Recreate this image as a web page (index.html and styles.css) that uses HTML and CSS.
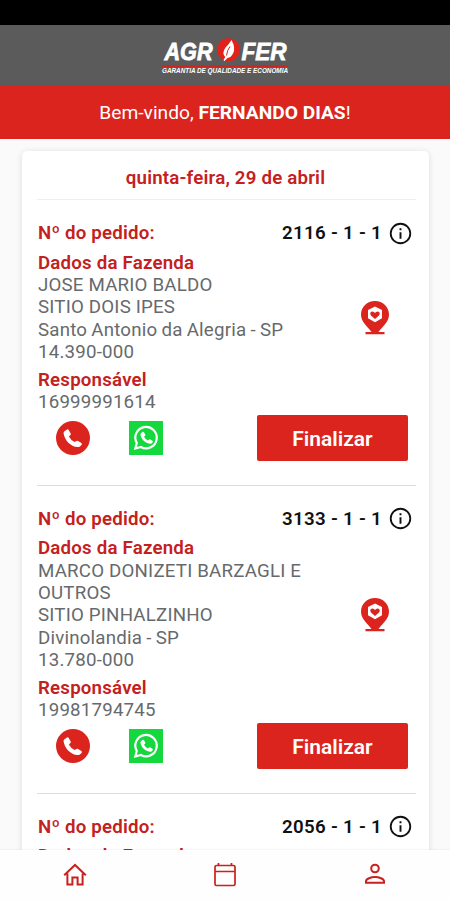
FILE: index.html
```html
<!DOCTYPE html>
<html lang="pt-BR">
<head>
    <meta charset="UTF-8">
    <meta name="viewport" content="width=device-width, initial-scale=1.0">
    <title>Agrofer - Pedidos</title>
    <link rel="stylesheet" href="styles.css">
</head>
<body>

    <!-- Ícones reutilizados -->
    <svg class="sprite" width="0" height="0">
        <symbol id="info" viewBox="0 0 24 24">
            <circle cx="12" cy="12" r="10.2" fill="none" stroke="#111" stroke-width="1.9"/>
            <path d="M11 6.6h2v2h-2zM11 10.6h2v6.8h-2z" fill="#111"/>
        </symbol>
        <symbol id="pin" viewBox="0 0 30 36">
            <path d="M15 1C7 1 1 7 1 14.5C1 22 7 26 11.5 32H5.5v2.2h19V32h-6C23 26 29 22 29 14.5C29 7 23 1 15 1z" fill="#db241d"/>
            <path d="M15 6.5l7 3.600v8.200l-7 4-7-4v-8.200z" fill="#fff"/>
            <path d="M15 19l-4-3.500q-1.300-1.500-.5-3 1.400-1.800 3.400-.5l1.100.9 1.100-.9q2-1.300 3.400.5.800 1.500-.5 3z" fill="#db241d"/>
        </symbol>
        <symbol id="phone" viewBox="0 0 34 34">
            <circle cx="17" cy="17" r="17" fill="#db241d"/>
            <path d="M8.200 10.600l2.800-2.100q1-.5 1.700.4l2 3.600q.4.900-.3 1.600l-1.500 1.300q2 3.800 5.700 5.700l1.900-1.100q.8-.4 1.600.1l3.200 2q1 .8.300 1.800l-1.800 1.700q-.8.600-2.200.5C14.500 25.200 8.800 19.500 7.600 12.400q-.1-1.200.6-1.800z" fill="#fff"/>
        </symbol>
        <symbol id="whats" viewBox="0 0 34 34">
            <path d="M0 0h34v34H0z" fill="#15d83f"/>
            <path d="M6.300 27.500l1.500-5.500a10.700 10.700 0 1 1 4.100 4z" fill="none" stroke="#fff" stroke-width="2.200"/>
            <path d="M12 12.300l1.600-1.500q.7-.4 1.200.2l1.500 2.600q.3.600-.2 1.100l-1.100 1q1.300 2.400 3.900 3.700l1.300-.9q.6-.4 1.200 0l2.300 1.400q.6.500.2 1.200l-1.400 1.300q-.7.500-1.700.3c-4.600-.8-8.500-4.700-9.300-8.800q-.1-1 .5-1.600z" fill="#fff"/>
        </symbol>
    </svg>

    <div class="status-bar"></div>

    <header class="topbar">
        <svg class="logo" width="130" height="41" viewBox="0 0 130 41">
            <g class="logo-name">
                <text x="4.500" y="24.500" textLength="48" lengthAdjust="spacingAndGlyphs">AGR</text>
                <text x="81.500" y="24.500" textLength="45" lengthAdjust="spacingAndGlyphs">FER</text>
            </g>
            <circle cx="68.500" cy="14.800" r="11.500" fill="#e3211b"/>
            <path d="M71.500 5q4.500 8 1.500 13.500-2 4-5.500 4.500l-3 3-1-.8 1.700-3.200q-3.700-4 .3-9.500Q69.500 8.500 71.500 5z" fill="#fff"/>
            <path d="M66.500 20.500q.5-5 3.500-9" stroke="#e3211b" stroke-width="1" fill="none"/>
            <path d="M2 31.200h126" stroke="#d3231d" stroke-width="1.600"/>
            <text class="logo-slogan" x="2" y="38" textLength="126" lengthAdjust="spacingAndGlyphs">GARANTIA DE QUALIDADE E ECONOMIA</text>
        </svg>
    </header>

    <div class="welcome">
        <p>Bem-vindo, <b>FERNANDO DIAS</b>!</p>
    </div>

    <main class="content">
        <div class="card">
            <h2 class="date">quinta-feira, 29 de abril</h2>

            <section class="order">
                <div class="order-head">
                    <h3>Nº do pedido:</h3>
                    <span class="order-number">2116 - 1 - 1</span>
                    <svg class="info"><use href="#info"/></svg>
                </div>
                <div class="farm">
                    <div class="farm-text">
                        <h3>Dados da Fazenda</h3>
                        <p>JOSE MARIO BALDO</p>
                        <p>SITIO DOIS IPES</p>
                        <p class="city">Santo Antonio da Alegria - SP</p>
                        <p>14.390-000</p>
                    </div>
                    <svg class="pin"><use href="#pin"/></svg>
                </div>
                <div class="contact">
                    <h3>Responsável</h3>
                    <p>16999991614</p>
                </div>
                <div class="actions">
                    <svg class="action-icon"><use href="#phone"/></svg>
                    <svg class="action-icon"><use href="#whats"/></svg>
                    <button class="finish-btn">Finalizar</button>
                </div>
            </section>

            <section class="order">
                <div class="order-head">
                    <h3>Nº do pedido:</h3>
                    <span class="order-number">3133 - 1 - 1</span>
                    <svg class="info"><use href="#info"/></svg>
                </div>
                <div class="farm">
                    <div class="farm-text">
                        <h3>Dados da Fazenda</h3>
                        <p>MARCO DONIZETI BARZAGLI E<br>OUTROS</p>
                        <p>SITIO PINHALZINHO</p>
                        <p class="city">Divinolandia - SP</p>
                        <p>13.780-000</p>
                    </div>
                    <svg class="pin"><use href="#pin"/></svg>
                </div>
                <div class="contact">
                    <h3>Responsável</h3>
                    <p>19981794745</p>
                </div>
                <div class="actions">
                    <svg class="action-icon"><use href="#phone"/></svg>
                    <svg class="action-icon"><use href="#whats"/></svg>
                    <button class="finish-btn">Finalizar</button>
                </div>
            </section>

            <section class="order">
                <div class="order-head">
                    <h3>Nº do pedido:</h3>
                    <span class="order-number">2056 - 1 - 1</span>
                    <svg class="info"><use href="#info"/></svg>
                </div>
                <div class="farm">
                    <div class="farm-text">
                        <h3>Dados da Fazenda</h3>
                    </div>
                </div>
            </section>
        </div>
    </main>

    <!-- Menu inferior -->
    <nav class="bottom-nav">
        <a href="#">
            <svg width="26" height="26" viewBox="0 0 26 26" fill="none" stroke="#c9211e" stroke-width="2">
                <path d="M2.200 13.200L13 3l10.800 10.200M5.400 11.500v11h5v-7h5.200v7h5v-11"/>
            </svg>
        </a>
        <a href="#">
            <svg width="26" height="26" viewBox="0 0 26 26" fill="none" stroke="#c9211e" stroke-width="1.700">
                <rect x="3" y="3.500" width="20" height="20" rx="1.500"/>
                <path d="M3 9.500h20M6.500 1V3.500M19.500 1V3.500"/>
            </svg>
        </a>
        <a href="#">
            <svg width="26" height="26" viewBox="0 0 26 26" fill="none" stroke="#c9211e" stroke-width="2">
                <circle cx="13" cy="6.500" r="3.800"/>
                <path d="M4 20.800v-1.500c0-2.500 5-4.300 9-4.300s9 1.800 9 4.300v1.500z"/>
            </svg>
        </a>
    </nav>

</body>
</html>
```
FILE: styles.css
```css
/* Geral */
body {
    font-family: Roboto, sans-serif;
    margin: 0;
    height: 900px;
    display: flex;
    flex-direction: column;
    overflow: hidden;
    background-color: #fafafa;
    color: #666a6d;
    font-size: 18.7px;
    line-height: 22.4px;
    letter-spacing: 0.2px;
}

h2, h3, p {
    margin: 0;
}

h2, h3 {
    font-size: 18.7px;
    font-weight: 600;
    color: #c4201d;
}

.sprite {
    position: absolute;
}

/* Topo */
.status-bar {
    height: 25px;
    flex-shrink: 0;
    background-color: #000;
}

.topbar {
    height: 61px;
    flex-shrink: 0;
    display: flex;
    align-items: center;
    justify-content: center;
    background-color: #5b5b5b;
}

.logo-name {
    font: italic 700 23.5px "Liberation Sans", sans-serif;
    fill: #fff;
    stroke: #fff;
    stroke-width: 0.8px;
    letter-spacing: 0;
}

.logo-slogan {
    font: italic 700 6.5px "Liberation Sans", sans-serif;
    fill: #fff;
    letter-spacing: 0;
}

.welcome {
    height: 52px;
    padding-top: 1px;
    flex-shrink: 0;
    display: flex;
    align-items: center;
    justify-content: center;
    background-color: #db241d;
    color: #fff;
    font-size: 19.2px;
    letter-spacing: 0;
}

.welcome b {
    font-weight: 700;
}

/* Lista de pedidos */
.content {
    flex: 1;
    min-height: 0;
    overflow: hidden;
    padding: 12px 21px 0 22px;
}

.card {
    height: 900px;
    padding: 0 13px 0 15px;
    background-color: #fff;
    border-radius: 5px;
    box-shadow: 0 1px 6px rgba(0, 0, 0, 0.12);
}

.date {
    height: 48px;
    line-height: 54px;
    padding-right: 2px;
    text-align: center;
    border-bottom: 1px solid #eee;
}

.order {
    padding: 21.6px 0 24px;
    border-bottom: 1px solid #dedede;
}

.order-head {
    display: flex;
    align-items: center;
    height: 24px;
    padding: 0 4px 0 1px;
    margin-bottom: 6px;
}

.order-number {
    margin-left: auto;
    font-weight: 600;
    letter-spacing: 0.3px;
    color: #111;
}

.info {
    width: 23px;
    height: 23px;
    margin: -1px 0 0 7px;
}

.farm {
    display: flex;
    align-items: center;
    justify-content: space-between;
    padding-left: 1px;
    margin-bottom: 5px;
}

.city {
    word-spacing: -0.7px;
}

.pin {
    width: 30px;
    height: 36px;
    margin: 21px 26px 0 0;
}

.contact {
    padding-left: 1px;
}

.actions {
    display: flex;
    align-items: center;
    height: 46px;
    margin-top: 1.2px;
    padding: 0 8px 0 19px;
}

.action-icon {
    width: 34px;
    height: 34px;
    margin-right: 39px;
}

.finish-btn {
    width: 151px;
    height: 46px;
    margin-left: auto;
    padding: 2px 0 0;
    background-color: #db241d;
    color: #fff;
    border: none;
    border-radius: 2px;
    font-family: Roboto, sans-serif;
    font-size: 21px;
    font-weight: 600;
}

/* Menu inferior */
.bottom-nav {
    height: 50px;
    flex-shrink: 0;
    display: flex;
    z-index: 1;
    background-color: #fefefe;
    box-shadow: 0 -1px 1px rgba(0, 0, 0, 0.03);
}

.bottom-nav a {
    flex: 1;
    display: flex;
    align-items: center;
    justify-content: center;
}
```
